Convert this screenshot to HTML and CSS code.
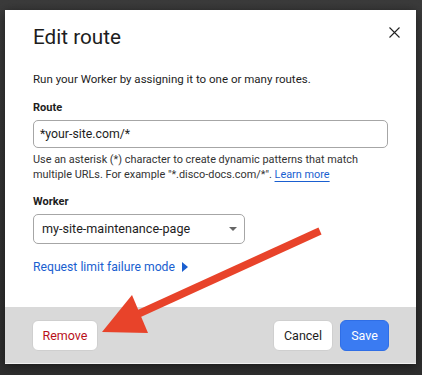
FILE: index.html
```html
<!DOCTYPE html>
<html>
<head>
<meta charset="utf-8">
<link rel="stylesheet" href="styles.css">
</head>
<body>
<div class="dialog">
  <div class="body">
    <div class="header">
      <h1 class="title">Edit route</h1>
      <button class="close" aria-label="Close">
        <svg width="11" height="11" viewBox="0 0 11 11"><path d="M0.5 0.5 L10.5 10.5 M10.5 0.5 L0.5 10.5" stroke="#222" stroke-width="1.1" fill="none"/></svg>
      </button>
    </div>
    <p class="intro">Run your Worker by assigning it to one or many routes.</p>
    <div class="field route">
      <label class="label">Route</label>
      <div class="input">*your-site.com/*</div>
      <p class="help">Use an asterisk (*) character to create dynamic patterns that match multiple URLs. For example "*.disco-docs.com/*". <a class="link">Learn more</a></p>
    </div>
    <div class="field worker">
      <label class="label">Worker</label>
      <div class="select"><span>my-site-maintenance-page</span><span class="caret"></span></div>
    </div>
    <a class="toggle">Request limit failure mode <span class="tri"></span></a>
  </div>
  <div class="footer">
    <button class="btn remove">Remove</button>
    <div class="actions">
      <button class="btn cancel">Cancel</button>
      <button class="btn primary">Save</button>
    </div>
  </div>
</div>
<svg class="arrow" width="422" height="375" viewBox="0 0 422 375">
  <line x1="320" y1="231" x2="125" y2="320" stroke="#e8432a" stroke-width="7.5"/>
  <polygon points="102,332 132,295 148,333" fill="#e8432a"/>
</svg>
</body>
</html>
```

FILE: styles.css
```css
* { box-sizing: border-box; }
html, body { margin: 0; padding: 0; }
body {
  width: 422px;
  height: 375px;
  background: linear-gradient(#3b3b3b, #2e2e2e);
  font-family: Roboto, "Noto Sans", sans-serif;
  color: #1d1d1d;
  position: relative;
  overflow: hidden;
  padding: 10px 6px 0 5px;
}
.dialog {
  width: 411px;
  height: 354px;
  background: #fff;
  display: flex;
  flex-direction: column;
  box-shadow: 0 2px 10px rgba(0,0,0,0.5);
}
.body {
  flex: 1;
  padding: 14px 28px 0 28px;
  display: flex;
  flex-direction: column;
}
.header {
  display: flex;
  justify-content: space-between;
  align-items: flex-start;
}
.title {
  margin: 0;
  font-size: 20.7px;
  font-weight: 400;
  line-height: 26px;
  color: #1d1d1d;
}
.close {
  border: 0;
  background: none;
  padding: 0;
  margin: 3px -12px 0 0;
  width: 11px;
  height: 11px;
  display: flex;
}
.intro {
  margin: 21px 0 0 0;
  font-size: 11.5px;
  line-height: 16px;
  color: #1d1d1d;
}
.field {
  display: flex;
  flex-direction: column;
}
.route { margin-top: 14px; }
.worker { margin-top: 13px; }
.label {
  font-size: 11px;
  font-weight: 700;
  line-height: 14px;
  color: #1d1d1d;
}
.input {
  margin-top: 5px;
  width: 355px;
  height: 28px;
  border: 1px solid #a6a6a6;
  border-radius: 5px;
  padding: 0 6px;
  font-size: 12.3px;
  line-height: 26px;
  color: #1d1d1d;
}
.help {
  margin: 4px 0 0 0;
  font-size: 10.9px;
  line-height: 15px;
  color: #333;
}
.link {
  color: #1a5fd0;
  text-decoration: underline;
  text-decoration-color: #1a5fd0;
  text-underline-offset: 2.5px;
}
.select {
  margin-top: 5px;
  width: 212px;
  height: 30px;
  border: 1px solid #a6a6a6;
  border-radius: 5px;
  padding: 0 7px 0 8px;
  font-size: 12.6px;
  line-height: 28px;
  display: flex;
  justify-content: space-between;
  align-items: center;
  color: #1d1d1d;
}
.caret {
  width: 0; height: 0;
  border-left: 4px solid transparent;
  border-right: 4px solid transparent;
  border-top: 4px solid #666;
}
.toggle {
  margin-top: 15px;
  font-size: 12.2px;
  line-height: 16px;
  color: #1a5fd0;
  display: flex;
  align-items: center;
  gap: 7px;
}
.tri {
  width: 0; height: 0;
  border-top: 5px solid transparent;
  border-bottom: 5px solid transparent;
  border-left: 6px solid #1a5fd0;
}
.footer {
  height: 57px;
  background: #d9d9d9;
  border-bottom: 1px solid #f0f0f0;
  display: flex;
  justify-content: space-between;
  align-items: center;
  padding: 1px 27px 0 27px;
}
.actions { display: flex; gap: 7px; }
.btn {
  font-family: Roboto, "Noto Sans", sans-serif;
  font-size: 12.5px;
  height: 31px;
  padding: 0;
  background: #fff;
  border: 1px solid #cfcfcf;
  border-radius: 6px;
  color: #1d1d1d;
}
.remove { color: #b8101a; width: 66px; }
.cancel { width: 60px; }
.primary {
  width: 49px;
  background: #3a7bf2;
  border-color: #2f6ee6;
  color: #fff;
}
.arrow {
  position: absolute;
  left: 0; top: 0;
  pointer-events: none;
}
```
